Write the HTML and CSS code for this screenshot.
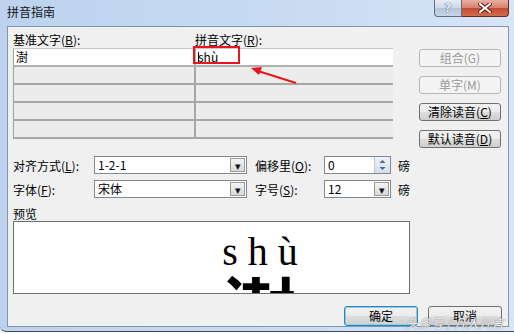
FILE: index.html
```html
<!DOCTYPE html>
<html lang="zh-CN">
<head>
  <meta charset="UTF-8" />
  <title>拼音指南</title>
  <link rel="stylesheet" href="styles.css">
</head>
<body>
  <div class="window">
    <div class="titlebar">
      <span class="title">拼音指南</span>
      <div class="caption-btns">
        <span class="cap help">?</span>
        <span class="cap close">
          <svg width="14" height="10" viewBox="0 0 14 10">
            <path d="M2 1 L12 9 M12 1 L2 9" stroke="#5a1a10" stroke-width="4" stroke-linecap="square"/>
            <path d="M2 1 L12 9 M12 1 L2 9" stroke="#fff" stroke-width="2" stroke-linecap="square"/>
          </svg>
        </span>
      </div>
    </div>

    <div class="client">
      <div class="top">
        <div class="entries">
          <div class="entry-labels">
            <span class="col-left">基准文字(<u>B</u>):</span>
            <span>拼音文字(<u>R</u>):</span>
          </div>
          <div class="table">
            <div class="row first">
              <div class="cell col-left">澍</div>
              <div class="cell"><span class="caret"></span>shù</div>
            </div>
            <div class="row"><div class="cell col-left"></div><div class="cell"></div></div>
            <div class="row"><div class="cell col-left"></div><div class="cell"></div></div>
            <div class="row"><div class="cell col-left"></div><div class="cell"></div></div>
            <div class="row"><div class="cell col-left"></div><div class="cell"></div></div>
          </div>
        </div>
        <div class="side">
          <button class="btn" disabled>组合(G)</button>
          <button class="btn" disabled>单字(M)</button>
          <button class="btn">清除读音(<u>C</u>)</button>
          <button class="btn">默认读音(<u>D</u>)</button>
        </div>
      </div>

      <div class="options">
        <span class="opt-label">对齐方式(<u>L</u>):</span>
        <div class="combo"><span class="value">1-2-1</span><span class="drop">&#9662;</span></div>
        <span class="opt-label mid">偏移里(<u>O</u>):</span>
        <div class="combo small"><span class="value">0</span>
          <span class="spin">
            <svg width="9" height="14" viewBox="0 0 9 14">
              <path d="M4.5 2 L7.5 5 L1.5 5 Z" fill="#4a6a9a"/>
              <path d="M4.5 12 L7.5 9 L1.5 9 Z" fill="#4a6a9a"/>
            </svg>
          </span>
        </div>
        <span class="unit">磅</span>

        <span class="opt-label">字体(<u>F</u>):</span>
        <div class="combo"><span class="value">宋体</span><span class="drop">&#9662;</span></div>
        <span class="opt-label mid">字号(<u>S</u>):</span>
        <div class="combo small"><span class="value">12</span><span class="drop">&#9662;</span></div>
        <span class="unit">磅</span>
      </div>

      <div class="preview-label">预览</div>
      <div class="preview">
        <div class="py">s h ù</div>
        <div class="hz">澍</div>
      </div>

      <div class="footer">
        <button class="btn wide default">确定</button>
        <button class="btn wide">取消</button>
      </div>
    </div>

    <!-- annotation over the dialog -->
    <svg class="marks" width="514" height="334" viewBox="0 0 514 334">
      <rect x="194" y="47" width="45" height="16" fill="none" stroke="#e8161b" stroke-width="2"/>
      <path d="M296 83 L258 71" stroke="#e8161b" stroke-width="2"/>
      <path d="M251 68 L262 67 L259 75 Z" fill="#e8161b"/>
    </svg>
    <div class="watermark">头条号 / 凡人凡言</div>
  </div>
</body>
</html>
```

FILE: styles.css
```css
body {
  margin: 0;
  background: #ffffff;
  font-family: "Noto Sans CJK SC", sans-serif;
  font-size: 12px;
  color: #000;
}

.window {
  position: relative;
  width: 514px;
  height: 332px;
  box-sizing: border-box;
  padding: 0 5px 5px 7px;
  background: linear-gradient(to right, #bcd2ee 0%, #c9dcf2 60%, #d6e6f7 100%);
  border-bottom: 1px solid #3c4a5c;
  border-bottom-left-radius: 6px;
  overflow: hidden;
}

/* title bar */
.titlebar {
  height: 26px;
  display: flex;
  align-items: flex-start;
  justify-content: space-between;
}

.title {
  margin-top: 4px;
  line-height: 16px;
  color: #111;
}

.caption-btns {
  display: flex;
}

.cap {
  height: 17px;
  box-sizing: border-box;
  display: flex;
  align-items: center;
  justify-content: center;
  border: 1px solid #5d6f89;
  border-top: none;
}

.help {
  width: 28px;
  border-bottom-left-radius: 4px;
  background: linear-gradient(#e6edf6 0%, #cbd8e8 50%, #b3c5db 51%, #c7d6e8 100%);
  color: #eef3f9;
  font-family: "DejaVu Sans", sans-serif;
  font-weight: bold;
  font-size: 12px;
  text-shadow: 0 0 1px #41536c, 0 0 1px #41536c;
}

.close {
  width: 47px;
  border-left: none;
  border-color: #6b2a20;
  border-bottom-right-radius: 4px;
  background: linear-gradient(#e8b0a4 0%, #d5806c 50%, #c24a30 51%, #d46d4e 100%);
}

/* client area */
.client {
  height: 301px;
  box-sizing: border-box;
  background: #f0f0f0;
  border: 1px solid #8195ad;
  padding: 6px 6px 0 5px;
  display: flex;
  flex-direction: column;
}

.top {
  display: flex;
}

.entries {
  width: 380px;
}

.entry-labels {
  display: flex;
  height: 15px;
  line-height: 13px;
}

.col-left {
  width: 182px;
  flex: none;
}

.table {
  border-left: 1px solid #a0a0a0;
  border-top: 1px solid #c8c8c8;
}

.row {
  display: flex;
  height: 18px;
  box-sizing: border-box;
  border-bottom: 2px solid #a7a7a7;
  background: #ececec;
}

.row.first {
  background: #fff;
  border-bottom-color: #b0b0b0;
}

.cell {
  box-sizing: border-box;
  padding-left: 2px;
  line-height: 16px;
  flex: 1;
}

.cell.col-left {
  flex: none;
  border-right: 2px solid #a7a7a7;
}

.row.first .cell {
  border-right-color: #b0b0b0;
}

.caret {
  display: inline-block;
  width: 1px;
  height: 12px;
  background: #000;
  vertical-align: -2px;
  margin-right: -1px;
}

.side {
  margin-left: 26px;
  padding-top: 16px;
  display: flex;
  flex-direction: column;
  gap: 9px;
}

.btn {
  width: 82px;
  height: 18px;
  padding: 0;
  font-family: "Noto Sans CJK SC", sans-serif;
  font-size: 12px;
  line-height: 14px;
  color: #000;
  border: 1px solid #707070;
  border-radius: 3px;
  background: linear-gradient(#f2f2f2 0%, #ebebeb 50%, #dddddd 51%, #cfcfcf 100%);
}

.btn:disabled {
  color: #9a9a9a;
  border-color: #b5b8bb;
  background: #f4f4f4;
}

/* alignment / font options */
.options {
  margin-top: 8px;
  display: grid;
  grid-template-columns: 81px 153px 77px 67px auto;
  grid-auto-rows: 18px;
  row-gap: 6px;
  align-items: center;
}

.opt-label.mid {
  padding-left: 8px;
}

.combo {
  height: 18px;
  box-sizing: border-box;
  border: 1px solid #828790;
  background: #fff;
  display: flex;
  align-items: center;
  justify-content: space-between;
}

.combo .value {
  padding-left: 3px;
  line-height: 14px;
}

.drop {
  width: 15px;
  height: 14px;
  margin-right: 1px;
  box-sizing: border-box;
  border: 1px solid #9a9a9a;
  background: linear-gradient(#f4f4f4, #d8d8d8);
  font-size: 11px;
  line-height: 12px;
  text-align: center;
  color: #111;
}

.spin {
  width: 15px;
  height: 16px;
  display: flex;
  align-items: center;
  justify-content: center;
  background: linear-gradient(#eef3f9, #d3dde9);
  border-left: 1px solid #c0c8d4;
}

.unit {
  padding-left: 7px;
}

.preview-label {
  margin-top: 8px;
  line-height: 15px;
}

.preview {
  width: 397px;
  height: 74px;
  box-sizing: border-box;
  border: 1px solid #707070;
  background: #fff;
  overflow: hidden;
  padding-left: 97px;
  display: flex;
  flex-direction: column;
  align-items: center;
}

.py {
  margin-top: 10px;
  font-family: "Liberation Serif", serif;
  font-size: 40px;
  line-height: 40px;
}

.hz {
  margin-top: -2px;
  font-size: 72px;
  line-height: 72px;
  font-weight: bold;
}

.footer {
  margin-top: 12px;
  display: flex;
  justify-content: flex-end;
  gap: 10px;
}

.btn.wide {
  width: 74px;
  height: 20px;
}

.btn.default {
  border-color: #3c7fb1;
  box-shadow: inset 0 0 0 1px #7fd2f5;
}

/* overlays */
.marks {
  position: absolute;
  left: 0;
  top: 0;
  pointer-events: none;
}

.watermark {
  position: absolute;
  left: 406px;
  top: 315px;
  font-size: 12.5px;
  line-height: 15px;
  font-style: italic;
  color: rgba(255, 255, 255, 0.9);
  text-shadow: 0 0 1px #8c8c8c, 0 0 1px #8c8c8c;
  white-space: nowrap;
}
```
